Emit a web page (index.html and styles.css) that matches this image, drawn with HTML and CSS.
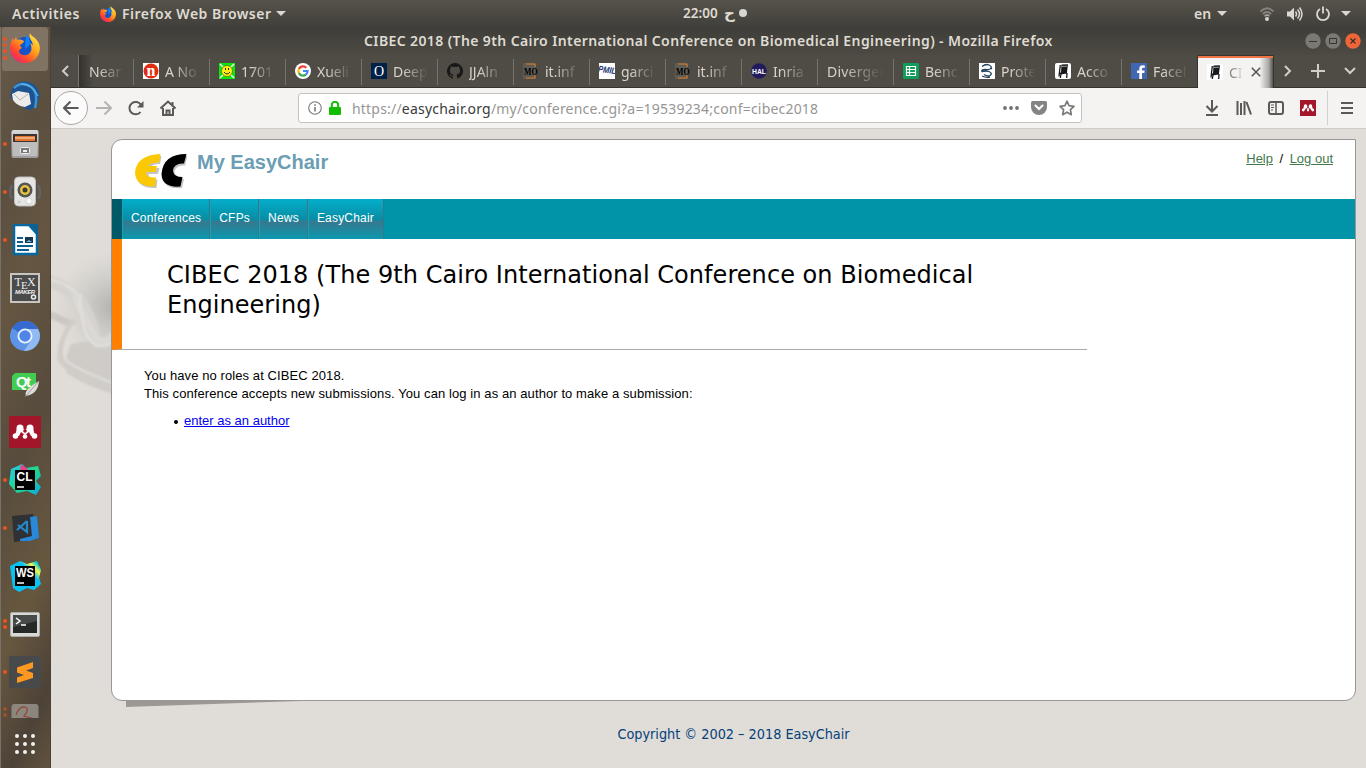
FILE: index.html
```
<!DOCTYPE html>
<html lang="en">
<head>
<meta charset="utf-8">
<title>CIBEC 2018 - EasyChair</title>
<link rel="stylesheet" href="styles.css">
</head>
<body>
<svg class="defs" width="0" height="0">
  <defs>
    <linearGradient id="fox" x1="0.9" y1="0" x2="0.1" y2="1"><stop offset="0" stop-color="#fff04a"/><stop offset=".4" stop-color="#ffa41c"/><stop offset=".7" stop-color="#ff4b2b"/><stop offset="1" stop-color="#e3158b"/></linearGradient>
    <linearGradient id="metal" x1="0" y1="0" x2="0" y2="1"><stop offset="0" stop-color="#d8d8d8"/><stop offset="1" stop-color="#9b9b9b"/></linearGradient>
    <linearGradient id="clion" x1="0" y1="0" x2="1" y2="1"><stop offset="0" stop-color="#22c6f4"/><stop offset=".5" stop-color="#21d789"/><stop offset="1" stop-color="#0aa8e8"/></linearGradient>
    <linearGradient id="storm" x1="0" y1="1" x2="1" y2="0"><stop offset="0" stop-color="#087cfa"/><stop offset=".1" stop-color="#07c3f2"/><stop offset=".65" stop-color="#07c3f2"/><stop offset=".78" stop-color="#fcf84a"/><stop offset=".9" stop-color="#00cdd7"/></linearGradient>
    <radialGradient id="shade"><stop offset="0" stop-color="#9c9c9a" stop-opacity=".7"/><stop offset="1" stop-color="#c4c2bf" stop-opacity="0"/></radialGradient>
    <filter id="soft"><feGaussianBlur stdDeviation=".8"/></filter>
    <symbol id="firefox" viewBox="0 0 30 30">
      <circle cx="15" cy="15" r="11" fill="#1753c8"/>
      <path d="M16 2c2 2 4 3 4 7 0 5-5 5-5 8" fill="#0a84ff"/>
      <path d="M20 0c0 3 9 5 9.800 14C30.500 23 24 30 15 30S0 23 0 15C0 10 2 7 3 5l1 3 2-4 1 3c3-1 5 0 7 1-1 3-3 3-4 4 0 2 2 2 2 3-2 1-3 2-3 4 3 5 10 4 12-1 1-3 0-7-1-8 1 0 3 2 3 3 0-6-5-7-3-13z" fill="url(#fox)"/>
    </symbol>
    <symbol id="chair" viewBox="0 0 16 16">
      <rect width="16" height="16" rx="2" fill="#fff"/>
      <path d="M6.500 1.500L13 1.200 12 9l-6 .5zM5 9.500l7-.5v1.500l-7 1z" fill="#16181a"/>
      <path d="M7 3.500l5-.3" stroke="#bbb" stroke-width=".8"/>
      <path d="M5.300 2L4 13.500M12 10l-.3 5M6 11l-.7 4" stroke="#16181a" stroke-width="1.300"/>
    </symbol>
    <symbol id="mo" viewBox="0 0 16 16">
      <rect x="0" width="13" height="16" fill="#5e5c56"/><path d="M3 1h9v3M12 12v3H3" fill="none" stroke="#df7d22"/>
      <text x="1" y="12" font-family="Liberation Serif" font-weight="bold" font-size="11" textLength="13.500" lengthAdjust="spacingAndGlyphs">MO</text>
    </symbol>
    <symbol id="mendeley" viewBox="0 0 32 32">
      <rect width="32" height="32" fill="#a31529"/>
      <g fill="#fff"><circle cx="11" cy="12" r="3.500"/><circle cx="21" cy="12" r="3.500"/><circle cx="6.500" cy="20" r="2.800"/><circle cx="25.500" cy="20" r="2.800"/><circle cx="16" cy="20.500" r="2.300"/><path d="M8 12h5l3 2 3-2h5l2 8h-4l-2-4-4 3-4-3-2 4H6z"/></g><circle cx="16" cy="15" r="1.800" fill="#a31529"/>
    </symbol>
  </defs>
</svg>

<header class="topbar">
  <span class="activities">Activities</span>
  <svg class="app-icon" width="16" height="16"><use href="#firefox"/></svg>
  <span class="app-name">Firefox Web Browser</span><i class="caret"></i>
  <div class="clock"><span class="time">22:00</span><span class="day">ح</span><i class="notify"></i></div>
  <div class="status">
    <span class="lang">en</span><i class="caret"></i>
    <svg class="wifi" width="16" height="16" viewBox="0 0 16 16" fill="none"><g stroke="#85837d" stroke-width="1.800"><path d="M1.500 5.500Q8-1 14.500 5.500"/><path d="M3.800 8Q8 4 12.200 8" /></g><path d="M5.600 10.200Q8 8 10.400 10.200" stroke="#aaa8a3" stroke-width="1.500"/><circle cx="8" cy="13" r="2" fill="#d8d6d2"/></svg>
    <svg class="sound" width="17" height="16" viewBox="0 0 17 16" fill="none" stroke="#dad8d4" stroke-width="1.500"><path d="M1 5.500h3L8 1.500v13l-4-4H1z" fill="#dad8d4" stroke="none"/><path d="M9.500 5.500q2 2.500 0 5M11.500 3.500q4 4.500 0 9M13.500 1.500q5 6.500 0 13"/></svg>
    <svg class="power" width="16" height="16" viewBox="0 0 16 16" fill="none" stroke="#dad8d4" stroke-width="1.800"><path d="M5 3a6 6 0 1 0 6 0M8 .5v7"/></svg>
    <i class="caret"></i>
  </div>
</header>

<div class="desktop">
<nav class="dock">
  <div class="launcher active"><i class="dots four"></i><svg width="30" height="30"><use href="#firefox"/></svg></div>
  <div class="launcher"><svg width="30" height="30" viewBox="0 0 30 30"><path d="M1 12C2 4 10-1 18 1c9 2 13 10 11 17-1 6-5 10-11 11l-8-5-8-6c-2-2-2-4-1-6z" fill="#1d5391"/><path d="M4 7Q11 0 20 5t5 22" fill="none" stroke="#3f92d2" stroke-width="2.500"/><path d="M11 3Q22 3 28 15" fill="none" stroke="#5fb0e4" stroke-width="1.300"/><path d="M2 13l6-3 11 2 2 11-6 3q-8-1-12-7z" fill="#eeecea"/><path d="M4 13l6 6 8-6" fill="none" stroke="#b5b2b0"/></svg></div>
  <div class="launcher"><i class="dots"></i><svg width="28" height="30" viewBox="0 0 28 30"><rect x=".5" y="1" width="27" height="28" rx="2" fill="url(#metal)"/><rect x="2" y="5" width="24" height="8" fill="#3b3330"/><path d="M4 7h20v5H4z" fill="#e4732e"/><path d="M4 9h20" stroke="#f5e1c8"/><path d="M2 13h24v14H2z" fill="#bdbdbd"/><rect x="9.500" y="18.500" width="9" height="6" rx="1" fill="#777" stroke="#eee"/><path d="M12 21h4v2h-4z" fill="#eee"/></svg></div>
  <div class="launcher"><i class="dots"></i><svg width="32" height="32" viewBox="0 0 32 32"><path d="M3 9q-4 8 0 14M29 9q4 8 0 14" stroke="#61718a" stroke-width="3" fill="none" opacity=".5"/><rect x="5.500" y="1" width="21" height="29" rx="4" fill="#e5e5e3" stroke="#bbb"/><circle cx="16" cy="14" r="7.500" fill="#555"/><circle cx="16" cy="14" r="5" fill="#e5c33d"/><circle cx="16" cy="14" r="2.500" fill="#3a3a3a"/><circle cx="20" cy="25" r="3" fill="#f8f8f8" stroke="#bbb" stroke-width=".5"/><circle cx="10" cy="26" r="1.500" fill="#ccc"/></svg></div>
  <div class="launcher"><i class="dots"></i><svg width="26" height="32" viewBox="0 0 26 32"><path d="M2 1h15l8 9v20H2z" fill="#fff" stroke="#0369a3" stroke-width="2.500"/><path d="M17 0h9v10z" fill="#0c6092"/><g stroke="#0b5f94" stroke-width="2"><path d="M5 14h6M5 18h6M5 22h16M5 26h12"/></g><path d="M13 13h8v6h-8z" fill="#18384f"/><path d="M14 18l3-2 3 2z" fill="#70b7df"/></svg></div>
  <div class="launcher"><svg width="30" height="30" viewBox="0 0 30 30"><rect x="1" y="1" width="28" height="28" fill="#4b4b4b" stroke="#c6c5c0" stroke-width="2"/><g fill="#eee"><text x="4.500" y="13" font-family="Liberation Serif" font-size="12">T</text><text x="11" y="16" font-family="Liberation Serif" font-size="11">E</text><text x="17" y="13" font-family="Liberation Serif" font-size="12">X</text><text x="5" y="21" font-family="Liberation Sans" font-weight="bold" font-style="italic" font-size="6" textLength="20">MAKER</text></g><circle cx="23.500" cy="24" r="2" fill="none" stroke="#eee" stroke-width="1.500"/></svg></div>
  <div class="launcher"><svg width="30" height="30" viewBox="0 0 30 30"><circle cx="15" cy="15" r="15" fill="#5e94e8"/><path d="M15 15L2 7a15 15 0 0 1 26 1z" fill="#356bd0"/><path d="M15 8h13a15 15 0 0 1-14 22l8-12z" fill="#91baf4"/><circle cx="15" cy="15" r="7.500" fill="#eaf2ff"/><circle cx="15" cy="15" r="5.700" fill="#4f86e5"/></svg></div>
  <div class="launcher"><svg width="28" height="26" viewBox="0 0 28 26"><path d="M4 2h21v17H1V5z" fill="#41cd52"/><text x="5" y="15.500" font-family="Liberation Sans" font-weight="bold" font-size="15" fill="#fff" textLength="15">Qt</text><path d="M28 10Q27 23 15 25q-3-6 13-15z" fill="#dddcda"/><path d="M27 11L14 26" stroke="#969491" stroke-width=".8"/></svg></div>
  <div class="launcher"><svg width="32" height="32"><use href="#mendeley"/></svg></div>
  <div class="launcher"><i class="dots"></i><svg width="32" height="32" viewBox="0 0 32 32"><path d="M2 5L13 0l4 4 12-2 3 10-5 5 5 6-5 8-9-4-10 2-8-9z" fill="url(#clion)"/><path d="M12 0l8 6h-9z" fill="#e44389"/><rect x="6" y="6" width="20" height="20" fill="#000"/><text class="ide" x="7.500" y="17">CL</text><path d="M8 23h7" stroke="#fff" stroke-width="1.500"/></svg></div>
  <div class="launcher"><i class="dots"></i><svg width="28" height="30" viewBox="0 0 28 30"><path d="M1 3l21-2 4 25-23 3z" fill="#303134"/><path d="M19 4l7-1 2 22-9 3H9v-2l12-3z" fill="#2988d8"/><path d="M16 8v11L7 12M16 8L6 17" fill="none" stroke="#2489ca" stroke-width="2.200"/></svg></div>
  <div class="launcher"><svg width="32" height="32" viewBox="0 0 32 32"><path d="M1 6L11 1l7 3 10-3 4 9-2 8 2 6-7 6-7-2-8 4-6-4z" fill="url(#storm)"/><rect x="6" y="6" width="20" height="20" fill="#000"/><text class="ide" x="7" y="17" textLength="18" lengthAdjust="spacingAndGlyphs">WS</text><path d="M8 23h7" stroke="#fff" stroke-width="1.500"/></svg></div>
  <div class="launcher"><i class="dots two"></i><svg width="30" height="26" viewBox="0 0 30 26"><rect x=".5" y="1.500" width="29" height="24" rx="1.500" fill="#d8d8d5" stroke="#aaa"/><rect x="3" y="4" width="24" height="18" fill="#272929"/><path d="M3 4h24v6L3 16z" fill="#484a49"/><path d="M6 7l4 3-4 3M11 14h5" stroke="#fff" stroke-width="1.500" fill="none"/></svg></div>
  <div class="launcher"><i class="dots"></i><svg width="32" height="32" viewBox="0 0 32 32"><rect width="32" height="32" rx="2" fill="#48494a"/><path d="M8 11.500L24 6v6l-7 2.500 7 2.500v5L8 27v-5.500l7-2.500-7-2.500z" fill="#ff9820"/></svg></div>
  <div class="launcher cut"><i class="dots two"></i><svg width="28" height="15" viewBox="0 0 28 15"><rect x=".5" y="1" width="27" height="30" rx="3" fill="#9b978f"/><path d="M5 12q3-9 9-8 5 2-1 9l10 3" fill="none" stroke="#a54437" stroke-width="1.300"/></svg></div>
  <svg class="apps" width="20" height="20" viewBox="0 0 20 20" fill="#f3f1ee"><circle cx="2" cy="2" r="2"/><circle cx="10" cy="2" r="2"/><circle cx="18" cy="2" r="2"/><circle cx="2" cy="10" r="2"/><circle cx="10" cy="10" r="2"/><circle cx="18" cy="10" r="2"/><circle cx="2" cy="18" r="2"/><circle cx="10" cy="18" r="2"/><circle cx="18" cy="18" r="2"/></svg>
</nav>

<main class="window">
  <div class="titlebar">
    <span class="window-title">CIBEC 2018 (The 9th Cairo International Conference on Biomedical Engineering) - Mozilla Firefox</span>
    <div class="controls">
      <svg width="16" height="16" viewBox="0 0 16 16"><circle cx="8" cy="8" r="7.700" fill="#7b7973"/><path d="M4 8.500h8" stroke="#34332f"/></svg>
      <svg width="16" height="16" viewBox="0 0 16 16"><circle cx="8" cy="8" r="7.700" fill="#7b7973"/><path d="M4.500 5.500h7v5h-7z" stroke="#34332f" fill="none"/></svg>
      <svg width="16" height="16" viewBox="0 0 16 16"><circle cx="8" cy="8" r="7.700" fill="#ee6539"/><path d="M5.500 5.500l5 5m0-5l-5 5" stroke="#3c2d24" stroke-width="1.200"/></svg>
    </div>
  </div>

  <div class="tabs">
    <div class="scroll left"><svg width="8" height="12" viewBox="0 0 8 12"><path d="M7 1L2 6l5 5"/></svg></div>
    <div class="tab partial"><span class="label">Near</span></div>
    <div class="tab"><svg width="16" height="16"><rect width="16" height="16" fill="#fff"/><circle cx="8" cy="8" r="7.500" fill="#e12c10"/><text x="3.500" y="12.500" font-family="Liberation Serif" font-weight="bold" font-size="16" fill="#fff">n</text></svg><span class="label">A No</span></div>
    <div class="tab"><svg width="16" height="16"><rect width="16" height="16" fill="#0be60b"/><path d="M1 1l14 14M15 1L1 15" stroke="#eee" stroke-width="1.500"/><circle cx="8" cy="8" r="5.500" fill="#ffee12" stroke="#5d6a12" stroke-width=".7"/><path d="M5 9q3 4 6 0M6.500 5v2M9.500 5v2" fill="none" stroke="#222"/></svg><span class="label">1701.</span></div>
    <div class="tab"><svg width="16" height="16" fill="none" stroke-width="2.200"><circle cx="8" cy="8" r="8" fill="#fff"/><path d="M11.300 4.700A4.600 4.600 0 0 0 3.900 6" stroke="#ea4335"/><path d="M3.900 6a4.600 4.600 0 0 0 0 4" stroke="#fbbc05"/><path d="M3.900 10a4.600 4.600 0 0 0 7 1.600" stroke="#34a853"/><path d="M10.900 11.600A4.600 4.600 0 0 0 12.600 8H8" stroke="#4285f4"/></svg><span class="label">Xueli</span></div>
    <div class="tab"><svg width="16" height="16"><rect width="16" height="16" fill="#002147"/><text x="3" y="12.500" font-family="Liberation Serif" font-size="14" fill="#fff">O</text></svg><span class="label">Deep</span></div>
    <div class="tab"><svg width="16" height="16" viewBox="0 0 16 16"><path fill="#191717" d="M8 0a8 8 0 0 0-2.500 15.600c.4.100.5-.2.500-.4v-1.500c-2.200.5-2.700-.9-2.700-.9-.4-.9-.9-1.200-.9-1.200-.7-.5.100-.5.100-.5.800.1 1.200.8 1.200.8.700 1.300 1.900.9 2.300.7.100-.5.300-.9.500-1.100-1.800-.2-3.600-.9-3.600-4 0-.9.300-1.600.8-2.200-.1-.2-.4-1 .1-2.100 0 0 .7-.2 2.200.8a7.500 7.500 0 0 1 4 0c1.500-1 2.200-.8 2.200-.8.400 1.100.2 1.900.1 2.100.5.600.8 1.300.8 2.200 0 3.100-1.900 3.700-3.700 3.900.3.300.6.800.6 1.500v2.300c0 .2.100.5.500.4A8 8 0 0 0 8 0z"/></svg><span class="label">JJAln</span></div>
    <div class="tab"><svg width="16" height="16"><use href="#mo"/></svg><span class="label">it.inf</span></div>
    <div class="tab"><svg width="16" height="16"><rect width="16" height="16" fill="#fff"/><g transform="rotate(8 8 8)"><text x="-1" y="10" font-family="Liberation Sans" font-weight="bold" font-style="italic" font-size="9" fill="#26356f" textLength="18" lengthAdjust="spacingAndGlyphs">PMIL</text></g></svg><span class="label">garci</span></div>
    <div class="tab"><svg width="16" height="16"><use href="#mo"/></svg><span class="label">it.inf</span></div>
    <div class="tab"><svg width="16" height="16"><circle cx="8" cy="8" r="7.800" fill="#211b5e"/><text x="1" y="11" font-family="Liberation Sans" font-weight="bold" font-size="8" fill="#fff" textLength="14" lengthAdjust="spacingAndGlyphs">HAL</text></svg><span class="label">Inria -</span></div>
    <div class="tab"><span class="label wide">Diverger</span></div>
    <div class="tab"><svg width="16" height="16"><rect width="16" height="16" rx="1" fill="#109d58"/><path d="M3.500 3.500h9v9h-9zM3.500 6.500h9M3.500 9.500h9M6.500 3.500v9" fill="none" stroke="#fff" stroke-width="1.200"/></svg><span class="label">Benc</span></div>
    <div class="tab"><svg width="16" height="16"><rect width="16" height="16" fill="#fff"/><path d="M3 3.500q4-3 7-1.500 4 2 1 4-2 1-5 .5-4 0-3 2 4-1 7 0 4 2 1 4-3 1-6-1M12 5l1 1M3 13q4 2 8 1" fill="none" stroke="#21405f" stroke-width="1.300"/></svg><span class="label">Prote</span></div>
    <div class="tab"><svg width="16" height="16"><use href="#chair"/></svg><span class="label">Acco</span></div>
    <div class="tab"><svg width="16" height="16"><rect width="16" height="16" fill="#4267b2"/><path d="M11 16v-6h2.300l.3-2.500H11V6q0-1.200 1.300-1.200h1.500V2.500Q8.300 1.700 8.300 5.500v2H6V10h2.300v6z" fill="#fff"/></svg><span class="label">Facel</span></div>
    <div class="tab selected"><svg width="16" height="16"><use href="#chair"/></svg><span class="label">CIB</span><svg class="close" width="10" height="10" viewBox="0 0 10 10"><path d="M.8.800l8.400 8.400M9.200.800L.8 9.200" stroke="#555" stroke-width="1.600"/></svg></div>
    <div class="scroll"><svg width="8" height="12" viewBox="0 0 8 12"><path d="M1 1l5 5-5 5"/></svg></div>
    <div class="scroll plus"><svg width="14" height="14" viewBox="0 0 14 14"><path d="M7 0v14M0 7h14"/></svg></div>
    <div class="scroll menu"><svg width="12" height="8" viewBox="0 0 12 8"><path d="M1 1l5 5 5-5"/></svg></div>
  </div>

  <div class="toolbar">
    <div class="back"><svg width="16" height="16" viewBox="0 0 16 16"><path d="M15.500 8h-14M7.500 1.500L1 8l6.500 6.500"/></svg></div>
    <svg class="forward" width="16" height="16" viewBox="0 0 16 16"><path d="M0 8h14.500M8.500 1.500L15 8l-6.500 6.500"/></svg>
    <svg class="reload" width="16" height="16" viewBox="0 0 16 16"><path d="M12.500 12A6.200 6.200 0 1 1 13 5"/><path d="M15.500 1v6.500H9z" fill="#5a5957" stroke="none"/></svg>
    <svg class="home" width="16" height="16" viewBox="0 0 16 16"><path d="M.5 8.500L8 1.500l7.500 7M3 8v7h10V8M12.500 2v3"/><path d="M6.500 15v-4.500h3V15"/></svg>
    <div class="urlbar">
      <svg width="14" height="14" viewBox="0 0 14 14" fill="none" stroke="#777" stroke-width="1.100"><circle cx="7" cy="7" r="6.300"/><path d="M7 6v4.500M7 3.300v1.400" stroke-width="1.600"/></svg>
      <svg class="lock" width="12" height="14" viewBox="0 0 12 14"><path d="M2.800 7V4a3.200 3.200 0 0 1 6.400 0v3" fill="none" stroke="#12bc00" stroke-width="2"/><rect y="6" width="12" height="8" rx="1" fill="#12bc00"/></svg>
      <span class="url">https://<b>easychair.org</b>/my/conference.cgi?a=19539234;conf=cibec2018</span>
      <svg class="more" width="16" height="4" viewBox="0 0 16 4" fill="#737271"><circle cx="2" cy="2" r="1.900"/><circle cx="8" cy="2" r="1.900"/><circle cx="14" cy="2" r="1.900"/></svg>
      <svg class="pocket" width="16" height="14" viewBox="0 0 16 14"><path d="M1.500 0h13Q16 0 16 1.500V6a8 8 0 0 1-16 0V1.500Q0 0 1.500 0z" fill="#858482"/><path d="M4.500 4.500L8 8l3.500-3.500" fill="none" stroke="#fff" stroke-width="2" stroke-linecap="round"/></svg>
      <svg class="star" width="16" height="16" viewBox="0 0 16 16"><path d="M8 1.200l2 4.500 5 .6-3.600 3.400.9 5L8 12.200l-4.300 2.500.9-5L1 6.300l5-.6z" fill="none" stroke="#7b7a78" stroke-width="1.700" stroke-linejoin="round"/></svg>
    </div>
    <div class="tools">
      <svg width="16" height="16" viewBox="0 0 16 16"><path d="M8 0v11M2.500 6L8 11.500 13.500 6M2 15h12"/></svg>
      <svg width="16" height="16" viewBox="0 0 16 16"><path d="M1.500 1v14M5 3v12M8.500 1v14M10.500 2l4.500 12.500"/></svg>
      <svg width="16" height="16" viewBox="0 0 16 16"><rect x="1" y="2" width="14" height="12" rx="2"/><path d="M8 2v12" stroke-width="1.500"/><path d="M3 5h3M3 7.500h3M3 10h2" stroke-width="1"/></svg>
      <svg class="addon" width="16" height="16"><use href="#mendeley"/></svg>
      <div class="hamburger"><svg width="12" height="12" viewBox="0 0 12 12"><path d="M0 1h12M0 6h12M0 11h12"/></svg></div>
    </div>
  </div>

  <div class="page">
    <svg class="backdrop" width="61" height="190" viewBox="0 0 61 190">
      <ellipse cx="64" cy="68" rx="62" ry="56" fill="url(#shade)"/>
      <g filter="url(#soft)" fill="none" stroke-linecap="round">
        <path d="M20 105q-10 22-3 30 18 12 46 20V92q-10 20-26 10z" fill="#cfccc8"/>
        <path d="M-4 42Q18 48 28 62t14 30" stroke="#d6d3cf" stroke-width="13"/>
        <path d="M-4 40Q18 44 26 56" stroke="#e5e3df" stroke-width="2"/>
        <path d="M0 76l18 8" stroke="#cbc8c4" stroke-width="7"/>
        <path d="M24 60q16 30 22 40 8 6 18-6" stroke="#dcd9d5" stroke-width="6"/>
        <path d="M29 56q0 38 15 50 9 3 20-4" stroke="#e3e1dd" stroke-width="2.500"/>
        <path d="M22 84q-14 20-12 36 4 12 52 28" stroke="#d0cdc9" stroke-width="7"/>
        <path d="M24 86q-14 18-10 34 6 8 48 24" stroke="#e3e1dd" stroke-width="2"/>
      </g>
    </svg>
    <section class="sheet">
      <div class="brand">
        <svg class="logo" width="56" height="42" viewBox="0 0 56 42">
          <g transform="translate(1.500 2)" fill="#c4c4c4"><path d="M26 2l-1.500 8q-8 0-10 4H24l-1.500 6H13q0 6 9 5.500L21 34Q2 35 1 21 2 3 26 2zM52 2l-2.500 9.500Q39 11 39 19q1 6 9.500 6L46.500 34Q28 36 27.500 22 29 2 52 2z"/></g>
          <path d="M26.500 2L25 10.500q-8-.5-11 3.500h9l-1.500 6H12q0 6 10 5.500L21 34.500Q2 35 1 21 2 3 26.500 2z" fill="#fac903"/>
          <path d="M52.500 2L50 11.500Q39.500 11 39 19q1 6 9.500 6L46.500 34.500Q28 36 27.500 22 29 2 52.500 2z"/>
        </svg>
        <h2>My EasyChair</h2>
        <div class="links"><a href="#">Help</a><span>/</span><a href="#">Log out</a></div>
      </div>
      <nav class="menu-bar"><a>Conferences</a><a>CFPs</a><a>News</a><a>EasyChair</a></nav>
      <div class="heading"><h1>CIBEC 2018 (The 9th Cairo International Conference on Biomedical Engineering)</h1></div>
      <div class="copy">
        <p>You have no roles at CIBEC 2018.</p>
        <p>This conference accepts new submissions. You can log in as an author to make a submission:</p>
        <ul><li><a href="#">enter as an author</a></li></ul>
      </div>
    </section>
    <div class="sheet-shadow"></div>
    <footer>Copyright © 2002 – 2018 EasyChair</footer>
  </div>
</main>
</div>
</body>
</html>
```
FILE: styles.css
```
* { box-sizing: border-box; }
body { margin: 0; width: 1366px; height: 768px; overflow: hidden; display: flex; flex-direction: column; font-family: "Noto Sans", sans-serif; }
svg { display: block; flex: none; }
.defs { position: absolute; }

.topbar { height: 27px; flex: none; display: flex; align-items: center; background: linear-gradient(#57534b, #403f3a); color: #dfdbd2; font-size: 14px; font-weight: 600; position: relative; white-space: nowrap; }
.activities { margin-left: 12px; width: 68px; letter-spacing: .55px; }
.app-icon { margin-left: 20px; }
.app-name { margin-left: 6px; width: 150px; letter-spacing: .48px; }
.caret { margin-left: 4px; border: 5px solid transparent; border-top-color: #d8d6d0; border-bottom: 0; }
.clock { position: absolute; left: 683px; top: 0; height: 26px; display: flex; align-items: center; font-size: 13.500px; }
.time { width: 36px; }
.day { margin-left: 5px; width: 10px; font-family: "DejaVu Sans", sans-serif; font-size: 15px; }
.notify { width: 8px; height: 8px; border-radius: 50%; background: #d8d6d2; margin-left: 5px; }
.status { margin-left: auto; display: flex; align-items: center; width: 172px; }
.lang { width: 19px; }
.wifi { margin-left: 32px; }
.sound { margin-left: 11px; }
.power { margin-left: 12px; }
.status .power + .caret { margin-left: 10px; }

.desktop { flex: 1; display: flex; min-height: 0; }
.dock { width: 51px; flex: none; background: linear-gradient(115deg, #685a49, #5b4f40 20%, #655642 35%, #574c3d 55%, #67573f 75%, #4c4237 90%, #62533e); border-left: 1px solid #77716a; border-right: 1px solid #4b4236; display: flex; flex-direction: column; align-items: center; padding-right: 2px; }
.launcher { width: 46px; height: 44px; flex: none; margin-bottom: 4px; position: relative; display: flex; align-items: center; justify-content: center; }
.launcher svg { margin-top: -2px; }
.launcher.active { background: #807364; border-radius: 3px; }
.launcher.cut { height: 18px; margin: 6px 0 11px; align-items: flex-start; opacity: .8; }
.dots { position: absolute; left: 1px; top: 19px; width: 4px; height: 4px; border-radius: 50%; background: #e95420; }
.dots.four { top: 10px; box-shadow: 0 6px #e95420, 0 12px #e95420, 0 19px #e95420; }
.dots.two { top: 16px; box-shadow: 0 6px #e95420; }
.cut .dots.two { top: 2px; opacity: .6; }
.ide { font: bold 12px "Liberation Sans", sans-serif; fill: #fff; }

.window { flex: 1; display: flex; flex-direction: column; min-width: 0; }
.titlebar { height: 28px; flex: none; display: flex; align-items: center; background: linear-gradient(#3e3d39, #4d4a43); color: #dfdbd2; }
.window-title { margin: -2px 0 0 313px; width: 695px; font-size: 14px; font-weight: 600; letter-spacing: .388px; white-space: nowrap; }
.controls { margin-left: auto; margin-right: 5px; display: flex; gap: 4px; }

.tabs { height: 33px; flex: none; display: flex; align-items: stretch; background: #4f4c45; border-bottom: 1px solid #34332f; }
.tab { width: 76px; flex: none; padding-left: 9px; display: flex; align-items: center; gap: 6px; overflow: hidden; border: 0 solid transparent; border-image: linear-gradient(transparent 5px, #77746d 5px, #77746d 29px, transparent 29px) 1; border-left-width: 1px; color: #d8d4cc; font-size: 14px; }
.label { flex: 1; white-space: nowrap; margin-right: 7px; min-width: 0; -webkit-mask-image: linear-gradient(90deg, #000 25%, transparent 95%); mask-image: linear-gradient(90deg, #000 25%, transparent 95%); }
.label.wide { letter-spacing: .2px; }
.tab.partial { width: 55px; padding-left: 10px; border-left: 1px solid #77746d; border-image: none; background: linear-gradient(90deg, #33312c, #4f4c45 14px); }
.tab.selected { width: 77px; height: 33px; border: 1px solid #34332f; border-image: none; border-bottom: 0; background: linear-gradient(#ef7345, #ef7345) top/100% 2px no-repeat, linear-gradient(90deg, #f4f3f2 82%, #aaa9a7 94%, #55534d); color: #8a8885; }
.tab.selected .label { margin-right: 0; }
.close { margin-right: 12px; }
.scroll { width: 28px; flex: none; display: flex; align-items: center; justify-content: center; }
.scroll svg { fill: none; stroke: #d1cec8; stroke-width: 2; }
.scroll.left { width: 27px; }
.scroll.plus { width: 32px; }
.scroll.menu { width: 32px; }

.toolbar { height: 41px; flex: none; display: flex; align-items: center; background: #f4f3f2; border-bottom: 1px solid #cfcbc6; }
.toolbar > svg, .back svg, .tools > svg, .hamburger svg { fill: none; stroke: #5a5957; stroke-width: 2; }
.back { width: 34px; height: 34px; margin-left: 3px; flex: none; border: 1px solid #a9a8a6; border-radius: 50%; background: #fbfbfb; display: flex; align-items: center; justify-content: center; }
.toolbar > .forward { margin-left: 8px; stroke: #b4b3b1; }
.toolbar .addon { stroke: none; }
.reload { margin-left: 16px; }
.home { margin-left: 16px; }
.urlbar { width: 784px; height: 30px; flex: none; margin-left: 122px; padding: 0 6px 0 9px; display: flex; align-items: center; background: #fff; border: 1px solid #c4c2be; border-radius: 3px; }
.lock { margin-left: 7px; }
.url { margin-left: 11px; flex: 1; font-size: 14px; letter-spacing: .2px; color: #979694; white-space: nowrap; }
.url b { color: #3a3a39; font-weight: 400; }
.pocket { margin-left: 12px; }
.star { margin-left: 12px; }
.tools { margin-left: auto; display: flex; align-items: center; gap: 16px; }
.hamburger { border-left: 1px solid #d3d1ce; height: 34px; width: 39px; display: flex; align-items: center; padding-left: 13px; margin-left: -5px; }

.page { flex: 1; position: relative; background: #e0ddd8; padding: 10px 10px 0 60px; font-family: "Liberation Sans", sans-serif; }
.backdrop { position: absolute; left: 0; top: 110px; }
.sheet { position: relative; height: 562px; background: #fff; border: 1px solid #979797; border-radius: 11px 0 11px 11px; }
.brand { height: 59px; display: flex; align-items: flex-start; padding: 12px 22px 0 22px; }
.brand h2 { margin: -1px 0 0 7px; font-size: 20px; line-height: 23px; color: #6b9eb4; }
.links { margin-left: auto; font-size: 13px; line-height: 15px; display: flex; gap: 6.500px; margin-top: -1px; }
.links a { color: #45774c; }
.menu-bar { height: 40px; display: flex; background: #0194a9; border-left: 10px solid #005966; }
.menu-bar a { padding: 0 8px; border-left: 1px solid #18a2b8; border-right: 1px solid #34788c; background: linear-gradient(#04aecb, #078ea5 50%, #357990 58%, #0a99ae 100%); color: #fff; font-size: 12px; letter-spacing: .2px; line-height: 38px; }
.menu-bar a:last-child { padding-right: 9px; }
.heading { width: 975px; height: 111px; border-left: 10px solid #ff7f00; border-bottom: 1px solid #aaa; padding: 21px 70px 0 45px; }
.heading h1 { margin: 0; font: 24px/30px "DejaVu Sans", sans-serif; letter-spacing: .05px; color: #000; }
.copy { padding: 17px 32px; font-size: 13px; line-height: 18px; color: #000; }
.copy p { margin: 0; letter-spacing: .09px; }
.copy ul { margin: 9px 0 0; padding-left: 40px; list-style: none; }
.copy li { display: flex; align-items: center; }
.copy li::before { content: ""; width: 4px; height: 4px; border-radius: 50%; background: #000; margin: 2px 6px 0 -10px; }
.copy li a { color: #00e; }
.sheet-shadow { width: 175px; height: 6px; margin-left: 15px; background: #9c9893; clip-path: polygon(0 0, 100% 0, 0 100%); }
footer { margin-top: 17px; margin-right: 0; text-align: center; font: 14.300px/20px "DejaVu Sans Condensed", "DejaVu Sans", sans-serif; color: #044178; }
```
